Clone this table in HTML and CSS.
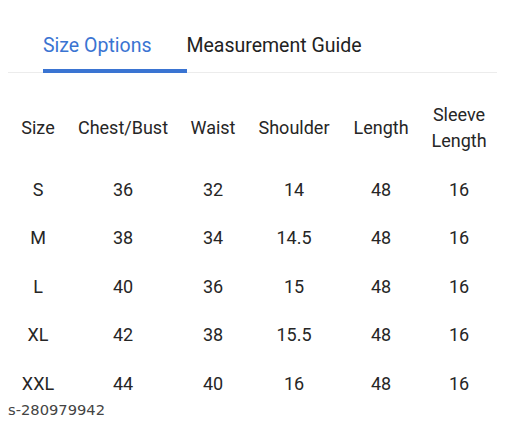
FILE: index.html
```html
<!DOCTYPE html>
<html>
<head>
<meta charset="utf-8">
<link rel="stylesheet" href="styles.css">
</head>
<body>
<div class="page">
  <div class="tabs">
    <div class="tab active">Size Options</div>
    <div class="tab">Measurement Guide</div>
  </div>
  <table class="chart">
    <thead>
      <tr>
        <th class="c1">Size</th>
        <th class="c2">Chest/Bust</th>
        <th class="c3">Waist</th>
        <th class="c4">Shoulder</th>
        <th class="c5">Length</th>
        <th class="c6">Sleeve<br>Length</th>
      </tr>
    </thead>
    <tbody>
      <tr><td>S</td><td>36</td><td>32</td><td>14</td><td>48</td><td>16</td></tr>
      <tr><td>M</td><td>38</td><td>34</td><td>14.5</td><td>48</td><td>16</td></tr>
      <tr><td>L</td><td>40</td><td>36</td><td>15</td><td>48</td><td>16</td></tr>
      <tr><td>XL</td><td>42</td><td>38</td><td>15.5</td><td>48</td><td>16</td></tr>
      <tr><td>XXL</td><td>44</td><td>40</td><td>16</td><td>48</td><td>16</td></tr>
    </tbody>
  </table>
  <div class="sku">s-280979942</div>
</div>
</body>
</html>
```
FILE: styles.css
```css
html, body {
  margin: 0;
  padding: 0;
  background: #fff;
}
body {
  font-family: Roboto, "Liberation Sans", sans-serif;
  color: #222;
  width: 512px;
  height: 427px;
  overflow: hidden;
}
.page {
  position: relative;
  padding: 0 15px 0 8px;
  height: 427px;
}
.tabs {
  display: flex;
  gap: 35px;
  padding-left: 35px;
  padding-top: 34px;
  border-bottom: 1px solid #ececec;
}
.tab {
  font-size: 19.5px;
  line-height: 24px;
  padding-bottom: 11px;
  border-bottom: 4px solid transparent;
  color: #222;
  margin-bottom: -1px;
}
.tab.active {
  color: #3a74d2;
  border-bottom-color: #3a74d2;
  padding-right: 36px;
  margin-right: -36px;
}
.chart {
  border-collapse: collapse;
  table-layout: fixed;
  width: 488px;
  margin-top: 17px;
  font-size: 18px;
  color: #262626;
}
.chart th {
  font-weight: 400;
  line-height: 26px;
  height: 75px;
  padding: 0;
  vertical-align: middle;
}
.chart td {
  text-align: center;
  height: 48.5px;
  padding: 0;
  vertical-align: middle;
}
.c1 { width: 60px; }
.c2 { width: 110px; }
.c3 { width: 70px; }
.c4 { width: 92px; }
.c5 { width: 82px; }
.c6 { width: 74px; }
.sku {
  position: absolute;
  left: 8px;
  top: 401px;
  font-family: "DejaVu Sans", sans-serif;
  font-size: 14.7px;
  color: #444;
}
```
